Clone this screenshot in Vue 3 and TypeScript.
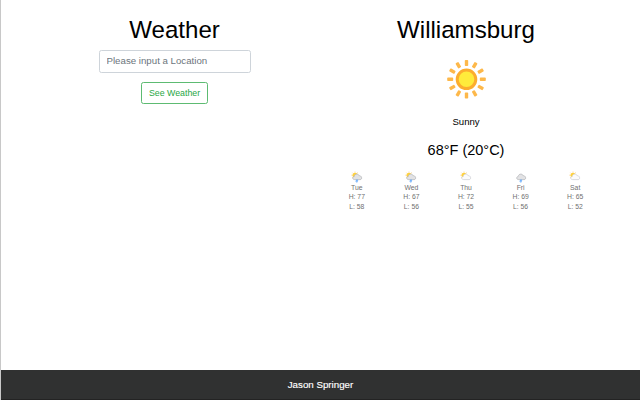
<script setup lang="ts">
import { ref } from 'vue'

interface Day {
  name: string
  high: number
  low: number
  sun: boolean
  rain: boolean
}

const location = ref<string>('')
const rays: number[] = Array.from({ length: 12 }, (_, i) => i * 30)
const days: Day[] = [
  { name: 'Tue', high: 77, low: 58, sun: true, rain: true },
  { name: 'Wed', high: 67, low: 56, sun: true, rain: true },
  { name: 'Thu', high: 72, low: 55, sun: true, rain: false },
  { name: 'Fri', high: 69, low: 56, sun: false, rain: true },
  { name: 'Sat', high: 65, low: 52, sun: true, rain: false },
]
</script>

<template>
  <div class="page">
    <main class="content">
      <section class="search">
        <h1>Weather</h1>
        <input v-model="location" class="field" type="text" placeholder="Please input a Location" />
        <button class="submit" type="button">See Weather</button>
      </section>
      <section class="report">
        <h1>Williamsburg</h1>
        <svg class="sun" viewBox="0 0 40 40">
          <rect
            v-for="angle in rays"
            :key="angle"
            x="18.8"
            y="1"
            width="3.4"
            height="6"
            rx="0.8"
            fill="#fdb84a"
            :transform="`rotate(${angle} 20.5 20.3)`"
          />
          <circle cx="20.5" cy="20.3" r="9.3" fill="#ffeb3b" stroke="#fcad2e" stroke-width="3" />
        </svg>
        <p class="condition">Sunny</p>
        <p class="temperature">68°F (20°C)</p>
        <div class="forecast">
          <div v-for="day in days" :key="day.name" class="day">
            <svg class="icon" viewBox="0 0 12 12">
              <g v-if="day.sun">
                <circle cx="4" cy="4.2" r="2.5" fill="#ffd23c" />
                <path
                  d="M4 .7v.7M.6 4.2h.7M1.5 1.8l.6.6M6.5 1.8l-.6.6M1.6 6.6l.5-.5"
                  stroke="#fbb540"
                  stroke-width=".8"
                />
              </g>
              <path
                d="M3.7 8.6C1.2 8.6 1 5.7 3.3 5.4 3.5 2.9 7.1 2.1 8.2 4.7 10.6 4.3 11.8 8.3 9.3 8.6Z"
                :fill="day.rain ? '#e2e2e4' : '#fbfbfc'"
                :stroke="day.rain ? '#adaeb2' : '#c7c9cf'"
                stroke-width=".65"
              />
              <path
                v-if="day.rain"
                d="M6.4 8.4 5.2 9.9h1.2L5.6 11.4"
                fill="none"
                stroke="#73b1fb"
                stroke-width="1.1"
              />
            </svg>
            <span>{{ day.name }}</span>
            <span>H: {{ day.high }}</span>
            <span>L: {{ day.low }}</span>
          </div>
        </div>
      </section>
    </main>
    <footer class="footer">Jason Springer</footer>
  </div>
</template>

<style>
body {
  margin: 0;
  background: #fff;
}
</style>

<style scoped>
.page {
  box-sizing: border-box;
  height: 400px;
  display: flex;
  flex-direction: column;
  border-left: 1px solid #c8c8c8;
  font-family: "Liberation Sans", Arial, sans-serif;
  font-size: 9.6px;
  color: #000;
  overflow: hidden;
}

.content {
  flex: 1;
  display: flex;
  padding: 0 28px 0 27px;
}

.search,
.report {
  display: flex;
  flex-direction: column;
  align-items: center;
  flex: none;
}

.search {
  width: 293px;
}

.report {
  width: 290px;
}

h1 {
  margin: 15px 0 6px;
  font-size: 24.1px;
  line-height: 29px;
  font-weight: 400;
}

.field {
  box-sizing: border-box;
  width: 152px;
  height: 23px;
  padding: 0 7px 2px;
  border: 1px solid #ced4da;
  border-radius: 2.4px;
  background: #fff;
  font: inherit;
  font-size: 9.7px;
  color: #495057;
}

.field::placeholder {
  color: #6c757d;
  opacity: 1;
}

.submit {
  box-sizing: border-box;
  width: 67px;
  height: 22px;
  margin: 9px 0 0;
  padding: 0;
  border: 1px solid #5dbb72;
  border-radius: 2.4px;
  background: #fff;
  font-family: inherit;
  font-size: 8.8px;
  line-height: 20px;
  color: #28a745;
}

.sun {
  display: block;
  width: 40px;
  height: 40px;
  margin-top: 9px;
}

.condition {
  margin: 16px 0 0;
  line-height: 14px;
}

.temperature {
  margin: 11px 0 0;
  font-size: 14.5px;
  line-height: 20px;
}

.forecast {
  display: grid;
  grid-template-columns: repeat(5, 54.6px);
  margin-top: 11px;
}

.day {
  display: flex;
  flex-direction: column;
  align-items: center;
  font-size: 6.8px;
  line-height: 9.5px;
  color: #707070;
}

.icon {
  display: block;
  width: 12px;
  height: 12px;
  margin-bottom: -0.4px;
}

.footer {
  box-sizing: border-box;
  height: 30px;
  flex: none;
  margin-left: -1px;
  padding-left: 1px;
  border-bottom: 1px solid #232323;
  background: #303131;
  color: #fff;
  font-size: 9.75px;
  text-align: center;
  line-height: 29px;
  -webkit-text-stroke: 0.15px #fff;
}
</style>
